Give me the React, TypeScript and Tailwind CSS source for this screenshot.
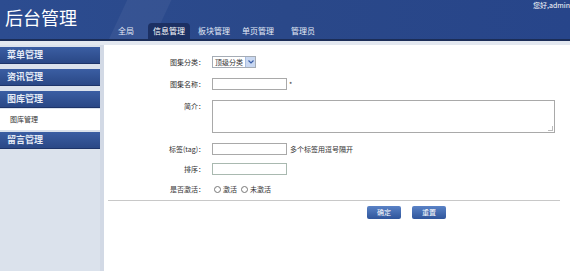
export default function App() {
  const menus = ['菜单管理', '资讯管理', '图库管理']

  return (
    <div className="w-[570px] h-[271px] overflow-hidden bg-[#dbe2ec] flex flex-col" style={{ fontFamily: '"Noto Sans CJK SC", "Liberation Sans", sans-serif' }}>
      {/* header */}
      <div className="relative h-[39px] shrink-0 bg-gradient-to-r from-[#2c4c90] via-[#2a4889] to-[#27458a] overflow-hidden">
        <div className="absolute left-[120px] top-[-20px] w-[40px] h-[80px] bg-white/5 rotate-[25deg]" />
        <div className="absolute left-[5px] top-[6px] text-[18px] leading-[22px] text-white">后台管理</div>
        <div className="absolute right-[0px] top-[1px] text-[7px] leading-[9px] text-white whitespace-nowrap">您好,admin</div>
        <div className="absolute left-[110px] bottom-0 flex items-end h-[16px] text-[8px] text-[#e4ebf7]">
          <div className="px-[8px] h-[16px] flex items-center">全局</div>
          <div className="ml-[6px] w-[42px] h-[16px] flex items-center justify-center rounded-t-[4px] bg-[#1c3063] text-white">信息管理</div>
          <div className="ml-[6px] px-[2px] h-[16px] flex items-center">板块管理</div>
          <div className="ml-[8px] px-[2px] h-[16px] flex items-center">单页管理</div>
          <div className="ml-[13px] px-[2px] h-[16px] flex items-center">管理员</div>
        </div>
      </div>
      <div className="h-[2px] shrink-0 bg-[#1b2d57]" />
      <div className="h-[4px] shrink-0 bg-[#e3e8f0]" />

      <div className="flex flex-1">
        {/* sidebar */}
        <div className="w-[100px] pt-[2px] flex flex-col">
          {menus.map((m) => (
            <div key={m} className="mb-[5px] h-[17px] flex items-center pl-[7px] text-[9px] font-bold text-[#e6ecf6] bg-gradient-to-b from-[#3b5ea3] to-[#2a4886] border-b border-[#1d3469]">
              {m}
            </div>
          ))}
          <div className="-mt-[4px] mb-[2px] h-[21px] flex items-center pl-[10px] text-[7px] text-[#333] bg-white">图库管理</div>
          <div className="h-[17px] flex items-center pl-[7px] text-[9px] font-bold text-[#e6ecf6] bg-gradient-to-b from-[#3b5ea3] to-[#2a4886] border-b border-[#1d3469]">
            留言管理
          </div>
        </div>
        <div className="w-[4px] bg-[#d2d9e5]" />

        {/* content */}
        <div className="flex-1 bg-white pt-[11px] text-[7px] text-[#333]">
          <div className="flex items-center h-[12px]">
            <div className="w-[101px] text-right">图集分类：</div>
            <div className="ml-[7px] w-[44px] h-[12px] border border-[#a5acb5] flex items-center">
              <span className="pl-[2px] flex-1 leading-none">顶级分类</span>
              <span className="w-[10px] h-[10px] bg-[#c9d8f1] border-l border-[#a9bde0] flex items-center justify-center">
                <svg width="6" height="4" viewBox="0 0 6 4"><path d="M0.5 0.5 L3 3 L5.5 0.5" fill="none" stroke="#3a5ea8" strokeWidth="1.2" /></svg>
              </span>
            </div>
          </div>

          <div className="mt-[10px] flex items-center h-[12px]">
            <div className="w-[101px] text-right">图集名称：</div>
            <div className="ml-[7px] w-[75px] h-[12px] border border-[#a9a9a9]" />
            <span className="ml-[2px]">*</span>
          </div>

          <div className="mt-[10px] flex items-start h-[33px]">
            <div className="w-[101px] text-right pt-[1px]">简介：</div>
            <div className="relative ml-[7px] w-[343px] h-[33px] border border-[#a9a9a9]">
              <div className="absolute right-[1px] bottom-[1px] w-[5px] h-[5px] border-r border-b border-[#bbb]" />
            </div>
          </div>

          <div className="mt-[10px] flex items-center h-[12px]">
            <div className="w-[101px] text-right">标签(tag)：</div>
            <div className="ml-[7px] w-[75px] h-[12px] border border-[#a9a9a9]" />
            <span className="ml-[3px]">多个标签用逗号隔开</span>
          </div>

          <div className="mt-[8px] flex items-center h-[12px]">
            <div className="w-[101px] text-right">排序：</div>
            <div className="ml-[7px] w-[75px] h-[12px] border border-[#a9b9b0]" />
          </div>

          <div className="mt-[8px] flex items-center h-[12px]">
            <div className="w-[101px] text-right">是否激活：</div>
            <div className="ml-[9px] flex items-center gap-[2px]">
              <span className="w-[7px] h-[7px] rounded-full border border-[#777] bg-white" />
              <span>激活</span>
            </div>
            <div className="ml-[4px] flex items-center gap-[2px]">
              <span className="w-[7px] h-[7px] rounded-full border border-[#777] bg-white" />
              <span>未激活</span>
            </div>
          </div>

          <div className="mt-[5px] ml-[4px] mr-[10px] h-px bg-[#c8c8c8]" />

          <div className="mt-[5px] flex gap-[11px] pl-[263px]">
            <div className="w-[34px] h-[13px] rounded-[2px] bg-gradient-to-b from-[#5a82c6] to-[#2f559b] text-white flex items-center justify-center">确定</div>
            <div className="w-[34px] h-[13px] rounded-[2px] bg-gradient-to-b from-[#5a82c6] to-[#2f559b] text-white flex items-center justify-center">重置</div>
          </div>
        </div>
      </div>
    </div>
  )
}
